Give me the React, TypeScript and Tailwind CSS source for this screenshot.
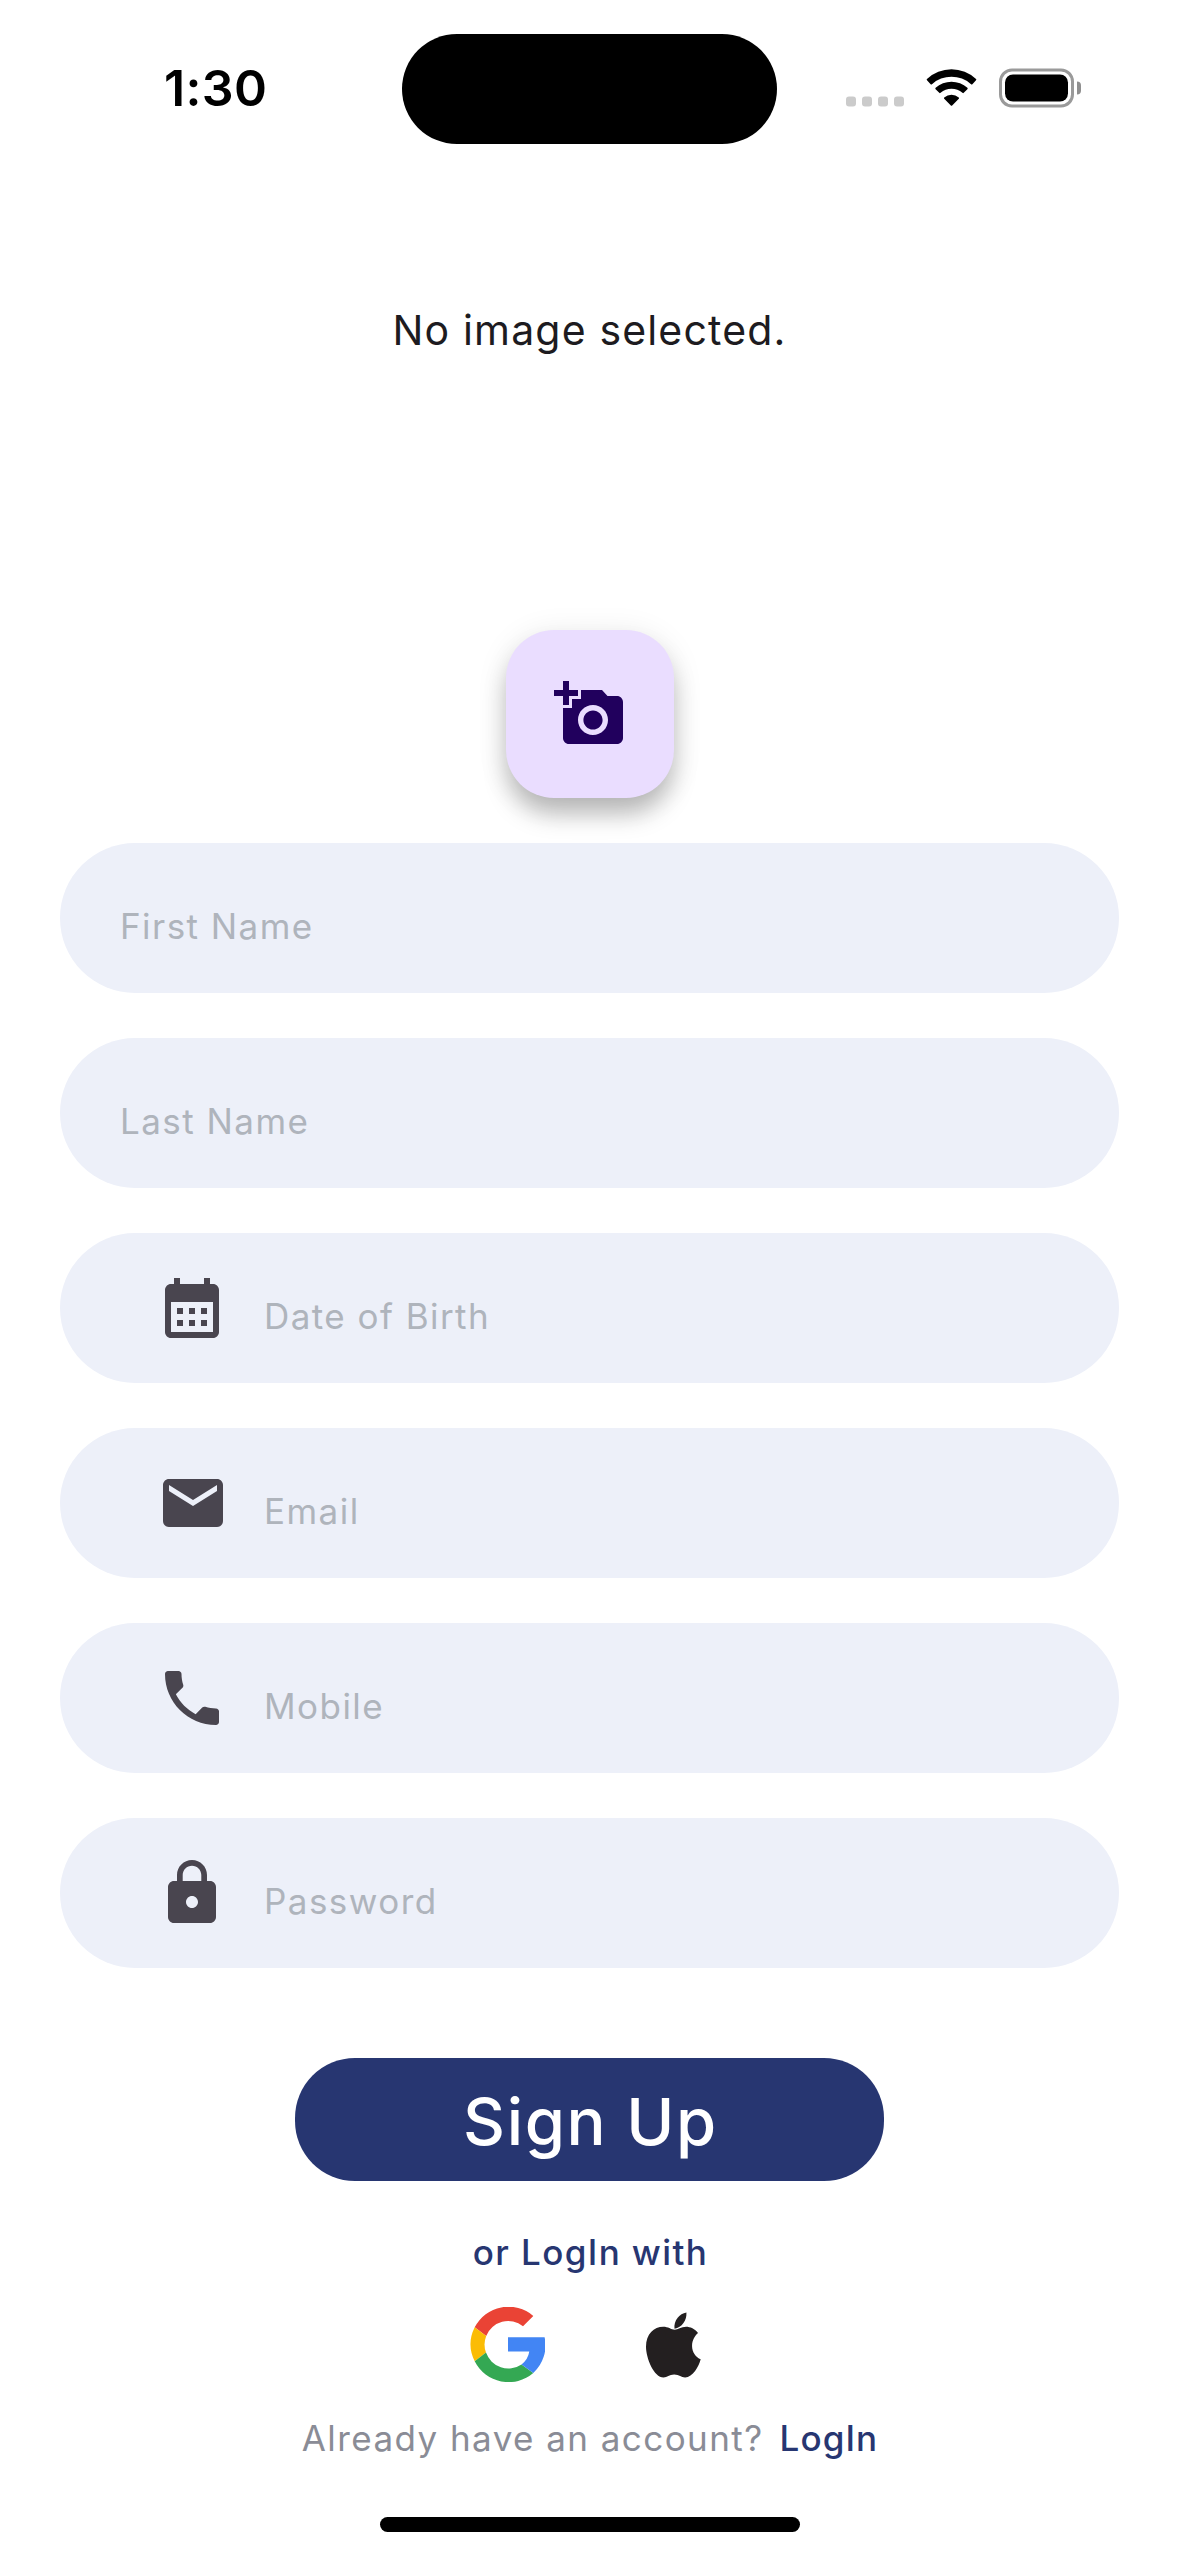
import type { ReactNode } from "react";

function MaterialIcon({ d, className }: { d: string; className: string }) {
  return (
    <svg viewBox="0 0 24 24" fill="currentColor" className={`size-[72px] shrink-0 ${className}`} aria-hidden="true">
      <path fillRule="evenodd" d={d} />
    </svg>
  );
}

const CAMERA =
  "M3 4V1h2v3h3v2H5v3H3V6H0V4h3zM6 10V7h3V4h7l1.83 2H21c1.1 0 2 .9 2 2v12c0 1.1-.9 2-2 2H5c-1.1 0-2-.9-2-2V10h3zM13 19c2.76 0 5-2.24 5-5s-2.24-5-5-5-5 2.24-5 5 2.24 5 5 5zM9.8 14c0 1.77 1.43 3.2 3.2 3.2s3.2-1.43 3.2-3.2-1.43-3.2-3.2-3.2-3.2 1.43-3.2 3.2z";
const CALENDAR =
  "M19 4h-1V2h-2v2H8V2H6v2H5c-1.1 0-2 .9-2 2v14c0 1.1.9 2 2 2h14c1.1 0 2-.9 2-2V6c0-1.1-.9-2-2-2zM19 20H5V10h14v10zM7 12h2v2H7zM11 12h2v2h-2zM15 12h2v2h-2zM7 16h2v2H7zM11 16h2v2h-2zM15 16h2v2h-2z";
const MAIL =
  "M20 4H4c-1.1 0-2 .9-2 2v12c0 1.1.9 2 2 2h16c1.1 0 2-.9 2-2V6c0-1.1-.9-2-2-2zM20 8l-8 5-8-5V6l8 5 8-5v2z";
const PHONE =
  "M6.62 10.79c1.44 2.83 3.76 5.14 6.59 6.59l2.2-2.2c.27-.27.67-.36 1.02-.24 1.12.37 2.33.57 3.57.57.55 0 1 .45 1 1V20c0 .55-.45 1-1 1-9.39 0-17-7.61-17-17 0-.55.45-1 1-1h3.5c.55 0 1 .45 1 1 0 1.25.2 2.45.57 3.57.11.35.03.74-.25 1.02l-2.2 2.2z";
const LOCK =
  "M18 8h-1V6c0-2.76-2.24-5-5-5S7 3.24 7 6v2H6c-1.1 0-2 .9-2 2v10c0 1.1.9 2 2 2h12c1.1 0 2-.9 2-2V10c0-1.1-.9-2-2-2zM12 17c-1.1 0-2-.9-2-2s.9-2 2-2 2 .9 2 2-.9 2-2 2zM15.1 8H8.9V6c0-1.71 1.39-3.1 3.1-3.1 1.71 0 3.1 1.39 3.1 3.1v2z";

function StatusBar() {
  return (
    <header className="flex h-[178px] w-full items-center">
      <div className="w-[402px] shrink-0 pb-0.5 pl-[164px] text-[50px] leading-[60px] font-semibold tracking-[0.37px] text-black">
        1:30
      </div>
      <div className="h-[110px] w-[375px] shrink-0 rounded-full bg-black" />
      <div className="ml-[69px] flex h-[39px] -translate-y-[1.5px] items-end">
        <div className="mb-px flex gap-1.5">
          {[0, 1, 2, 3].map((i) => (
            <span key={i} className="size-2.5 rounded-[3px] bg-[#cbcbcb]" />
          ))}
        </div>
        <svg viewBox="438 116 154 114" className="mb-px ml-[22px] h-[38px] w-[51px]" aria-hidden="true">
          <path d="M441 147A108 108 0 0 1 589 147Q591 149 589 151L578 163Q576 165 574 163A88 88 0 0 0 456 163Q454 165 452 163L441 151Q439 149 441 147Z" />
          <path d="M467 174A71 71 0 0 1 563 174Q565 176 563 178L552 189Q550 191 548 189A51 51 0 0 0 482 189Q480 191 478 189L467 178Q465 176 467 174Z" />
          <path d="M493 203A34 34 0 0 1 537 203Q539 205 537 207L517 227Q515 229 513 227L493 207Q491 205 493 203Z" />
        </svg>
        <div className="ml-[22px] flex h-[39px] w-[75px] rounded-[13px] border-[3px] border-[#9a9a9a] p-[3px]">
          <div className="flex-1 rounded-lg bg-black" />
        </div>
        <div className="mb-[13px] ml-[3px] h-[13px] w-1 rounded-r-full bg-[#8f8f8f]" />
      </div>
    </header>
  );
}

function Field({ label, icon }: { label: string; icon?: ReactNode }) {
  return (
    <div
      className={
        icon
          ? "flex h-[150px] items-center gap-9 rounded-full bg-[#edf0f9] pl-24"
          : "flex h-[150px] items-center rounded-full bg-[#edf0f9] pl-[60px]"
      }
    >
      {icon}
      <span className="pt-4 text-[35px] leading-[54px] tracking-[1.45px] text-[#afb4bc]">{label}</span>
    </div>
  );
}

function GoogleLogo() {
  return (
    <svg viewBox="0 0 75 75" className="size-[75px]" aria-hidden="true">
      <path fill="#ea4335" d="M4.7 20.3A38 38 0 0 1 63.3 8.9L53 19.2A23.6 23.6 0 0 0 16.2 28.9Z" />
      <path fill="#fbbc05" d="M4.7 20.3A38 38 0 0 0 4.7 54.3L16 45.6A23.6 23.6 0 0 1 16.2 28.9Z" />
      <path fill="#34a853" d="M4.7 54.3A38 38 0 0 0 63.3 66L51.5 57.4A23.6 23.6 0 0 1 16 45.6Z" />
      <path fill="#4285f4" d="M38 30.2H74.6A37.5 37.5 0 0 1 63.3 66L51.5 57.4A20 20 0 0 0 59.3 44.5H38Z" />
    </svg>
  );
}

function AppleLogo() {
  return (
    <svg viewBox="44 34 166 198" className="h-[66px] w-[55px]" fill="#231f20" aria-hidden="true">
      <path d="M131 87C119 86 111 78 96 78C68 78 44 100 44 138C44 172 68 231 97 231C108 231 114 222 129 222C145 222 150 231 162 231C185 231 204 197 209 176C195 171 183 155 183 136C183 118 192 105 201 97C192 84 177 78 165 78C150 78 140 87 131 87Z" />
      <path d="M130 84C127 60 145 38 166 35C168 58 152 81 130 84Z" />
    </svg>
  );
}

export default function App() {
  return (
    <div className="flex h-[2556px] w-[1179px] flex-col items-center overflow-hidden bg-white font-[Inter,sans-serif]">
      <StatusBar />

      <div className="flex h-[304px] items-center text-[41px] leading-[60px] tracking-[1.16px] text-[#1d1b20]">
        No image selected.
      </div>

      <button
        aria-label="Add photo"
        className="mt-[148px] flex size-[168px] shrink-0 items-center justify-center rounded-[48px] bg-[#eaddff] shadow-[0_18px_24px_-2px_rgba(0,0,0,0.25),0_4px_32px_rgba(0,0,0,0.09)]"
      >
        <MaterialIcon d={CAMERA} className="text-[#21005d]" />
      </button>

      <form className="mt-[45px] flex w-full flex-col gap-[45px] px-[60px]">
        <Field label="First Name" />
        <Field label="Last Name" />
        <Field label="Date of Birth" icon={<MaterialIcon d={CALENDAR} className="text-[#49454f]" />} />
        <Field label="Email" icon={<MaterialIcon d={MAIL} className="-mr-px ml-px text-[#49454f]" />} />
        <Field label="Mobile" icon={<MaterialIcon d={PHONE} className="text-[#49454f]" />} />
        <Field label="Password" icon={<MaterialIcon d={LOCK} className="text-[#49454f]" />} />
      </form>

      <button className="mt-[90px] flex h-[123px] w-[589px] shrink-0 items-center justify-center rounded-[60px] bg-[#273671] pt-1 pl-0.5 text-[65px] leading-[80px] font-medium tracking-[1.65px] text-white">
        Sign Up
      </button>

      <p className="mt-11 pl-0.5 text-[35px] leading-[54px] font-medium tracking-[1.38px] text-[#273671]">
        or LogIn with
      </p>

      <div className="mt-7 flex h-[75px] items-center gap-[101px] pr-[9px]">
        <GoogleLogo />
        <AppleLogo />
      </div>

      <p className="mt-[29px] flex gap-4 pl-px text-[35px] leading-[54px]">
        <span className="tracking-[1.44px] text-[#8a8c96]">Already have an account?</span>
        <span className="font-medium tracking-[1.09px] text-[#273671]">LogIn</span>
      </p>

      <div className="mt-[52px] h-[15px] w-[420px] shrink-0 rounded-full bg-black" />
    </div>
  );
}
